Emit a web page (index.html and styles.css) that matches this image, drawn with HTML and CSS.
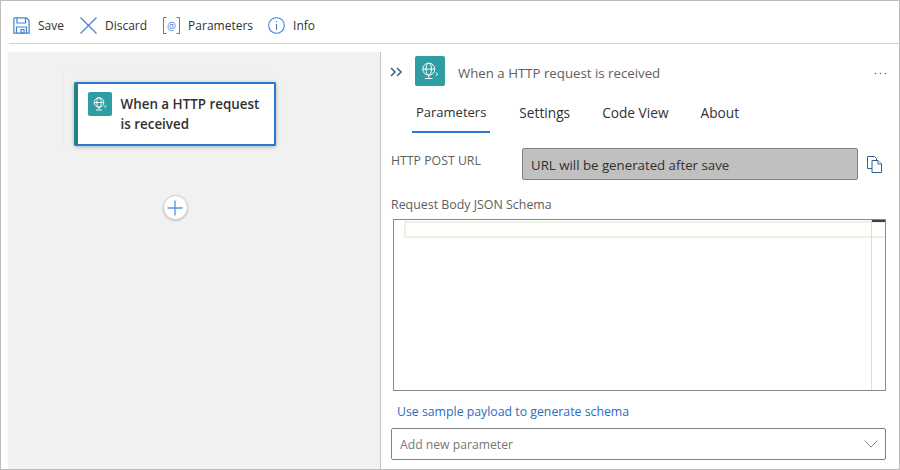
FILE: index.html
```html
<!DOCTYPE html>
<html lang="en">
<head>
  <meta charset="UTF-8">
  <title>Logic App Designer</title>
  <link rel="stylesheet" href="styles.css">
</head>
<body>
  <div class="app">
    <div class="toolbar">
      <button class="tool tool-save">
        <svg class="tool-icon" width="17" height="17" viewBox="0 0 17 17" fill="none" stroke="#3f83d6" stroke-width="1.200">
          <path d="M1.5 .9h12l2.600 2.600v12.600H.9V1.500z"/>
          <path d="M4 1v5h8.500V1"/>
          <path d="M3.500 16v-6h10v6"/>
          <path d="M8 12.500h3v3.500H8z"/>
        </svg>
        Save
      </button>
      <button class="tool tool-discard">
        <svg class="tool-icon" width="17" height="17" viewBox="0 0 17 17" fill="none" stroke="#3f83d6" stroke-width="1.2">
          <path d="M.5 .5l16 16M16.500 .5l-16 16"/>
        </svg>
        Discard
      </button>
      <button class="tool tool-params">
        <svg class="tool-icon" width="17" height="17" viewBox="0 0 17 17" fill="none" stroke="#3f83d6" stroke-width="1">
          <path d="M3.500 .5H.5v16h3M13.500 .5h3v16h-3"/>
          <text class="at-sign" x="8.500" y="12.500" text-anchor="middle">@</text>
        </svg>
        Parameters
      </button>
      <button class="tool tool-info">
        <svg class="tool-icon" width="17" height="17" viewBox="0 0 17 17" fill="none" stroke="#3f83d6" stroke-width="1.1">
          <circle cx="8.500" cy="8.500" r="7.800"/>
          <path d="M8.500 7v6"/>
          <path d="M8.500 4v1.400"/>
        </svg>
        Info
      </button>
    </div>

    <div class="main">
      <div class="canvas">
        <div class="card-ghost">
          <div class="card">
            <span class="badge badge-small">
              <svg width="16" height="16" viewBox="0 0 16 16" fill="none" stroke="#fff" stroke-width=".9">
                <circle cx="7" cy="6.500" r="4.800"/>
                <ellipse cx="7" cy="6.500" rx="2.200" ry="4.800"/>
                <path d="M2.200 6.500h9.600M7 11.300v2.200M4 14h6M12.500 9l1.500 1.500-1.500 1.500"/>
              </svg>
            </span>
            <div class="card-title">When a HTTP request is received</div>
          </div>
        </div>
        <button class="add-step">
          <svg width="16" height="16" viewBox="0 0 16 16" stroke="#5b98e0" stroke-width="1.300">
            <path d="M8 .5v15M.5 8h15"/>
          </svg>
        </button>
      </div>

      <div class="panel">
        <div class="panel-head">
          <svg class="collapse" width="13" height="10" viewBox="0 0 13 10" fill="none" stroke="#2f5f8f" stroke-width="1.500">
            <path d="M1 1l4 4-4 4M7 1l4 4-4 4"/>
          </svg>
          <span class="badge badge-large">
            <svg width="20" height="20" viewBox="0 0 16 16" fill="none" stroke="#fff" stroke-width=".8">
              <circle cx="7" cy="6.500" r="4.800"/>
              <ellipse cx="7" cy="6.500" rx="2.200" ry="4.800"/>
              <path d="M2.200 6.500h9.600M7 11.300v2.200M4 14h6M12.500 9l1.500 1.500-1.500 1.500"/>
            </svg>
          </span>
          <span class="panel-title">When a HTTP request is received</span>
          <svg class="more" width="13" height="3" viewBox="0 0 13 3" fill="#2b6cc0">
            <circle cx="1.500" cy="1.500" r=".8"/>
            <circle cx="6.500" cy="1.500" r=".8"/>
            <circle cx="11.500" cy="1.500" r=".8"/>
          </svg>
        </div>

        <div class="tabs">
          <div class="tab tab-active">Parameters</div>
          <div class="tab">Settings</div>
          <div class="tab">Code View</div>
          <div class="tab">About</div>
        </div>

        <div class="url-row">
          <label class="url-label">HTTP POST URL</label>
          <div class="url-box">URL will be generated after save</div>
          <svg class="copy" width="15" height="17" viewBox="0 0 15 17" fill="#fff" stroke="#2f5f8f" stroke-width="1">
            <path d="M.5 .5h7l2 2v10h-9z"/>
            <path d="M5 4.500h6l3.500 3.500v8.500H5z"/>
            <path d="M11 4.500V8h3.500"/>
          </svg>
        </div>

        <div class="schema-label">Request Body JSON Schema</div>
        <div class="editor">
          <div class="editor-line"></div>
          <div class="editor-ruler"></div>
          <div class="editor-mark"></div>
        </div>

        <a class="sample-link">Use sample payload to generate schema</a>

        <div class="param-select">
          <span>Add new parameter</span>
          <svg width="14" height="8" viewBox="0 0 14 8" fill="none" stroke="#8a8a8a" stroke-width="1">
            <path d="M.5 .5L7 7l6.500-6.500"/>
          </svg>
        </div>
      </div>
    </div>
  </div>
</body>
</html>
```

FILE: styles.css
```css
* {
  box-sizing: border-box;
}
body {
  margin: 0;
  font-family: "Open Sans", "Noto Sans", sans-serif;
  font-size: 12px;
  color: #323130;
  background-color: #fff;
}
.app {
  width: 900px;
  height: 470px;
  display: flex;
  flex-direction: column;
  border: 1px solid #bdbdbd;
  padding-left: 1px;
  overflow: hidden;
}
.toolbar {
  height: 43px;
  margin-left: 7px;
  margin-right: -1px;
  padding-left: 4px;
  padding-top: 6px;
  flex-shrink: 0;
  display: flex;
  align-items: center;
  border-bottom: 1px solid #d2d2d2;
}
.tool {
  display: flex;
  align-items: center;
  padding: 0;
  border: none;
  background: none;
  font: inherit;
  color: #323130;
}
.tool-icon {
  margin-right: 8px;
}
.tool-save,
.tool-discard {
  margin-right: 16px;
}
.tool-params {
  margin-right: 15px;
}
.at-sign {
  font-size: 10px;
  fill: #3f83d6;
  stroke: none;
}
.main {
  flex: 1;
  display: flex;
  margin-top: 8px;
  min-height: 0;
}
.canvas {
  width: 372px;
  margin-left: 6px;
  padding-top: 16px;
  background-color: #f1f1f1;
  display: flex;
  flex-direction: column;
  align-items: center;
}
.card-ghost {
  width: 205px;
  margin-left: -58px;
  padding: 13px 0 0 10px;
  border-top: 1px solid #ebeff5;
  border-left: 1px solid #ececec;
}
.card {
  width: 202px;
  height: 64px;
  display: flex;
  padding: 8px 8px 0 10px;
  background-color: #fff;
  border: 2px solid #2b78d4;
  border-left: 4px solid #24808a;
  border-radius: 2px;
  box-shadow: 0 1px 4px rgba(0, 0, 0, 0.25);
}
.badge {
  display: flex;
  align-items: center;
  justify-content: center;
  flex-shrink: 0;
  background-color: #2f9ea2;
  border-radius: 2px;
}
.badge-small {
  width: 24px;
  height: 24px;
}
.card-title {
  margin-left: 9px;
  padding-top: 2px;
  font-size: 13.4px;
  font-weight: 600;
  line-height: 20px;
}
.add-step {
  width: 25px;
  height: 25px;
  margin-top: 49px;
  margin-left: -38px;
  padding: 0;
  display: flex;
  align-items: center;
  justify-content: center;
  background-color: #fff;
  border: 1px solid #cfcfcf;
  border-radius: 50%;
  box-shadow: 0 1px 2px rgba(0, 0, 0, 0.2);
}
.panel {
  flex: 1;
  padding-left: 9px;
  padding-right: 12px;
  border-left: 1px solid #c4c4c4;
  display: flex;
  flex-direction: column;
}
.panel-head {
  height: 34px;
  display: flex;
  align-items: center;
  margin-top: 2px;
}
.collapse {
  margin-right: 12px;
  margin-top: 2px;
}
.badge-large {
  width: 30px;
  height: 30px;
}
.panel-title {
  margin-left: 13px;
  margin-top: 4px;
  font-size: 13.25px;
  color: #605e5c;
}
.more {
  margin-left: auto;
  margin-top: 4px;
}
.tabs {
  display: flex;
  margin-left: 22px;
  margin-top: 3px;
  height: 42px;
}
.tab {
  padding: 12px 4px 0;
  margin-right: 24px;
  font-size: 13.7px;
}
.tab-active {
  margin-right: 25px;
  font-size: 13px;
  border-bottom: 2px solid #2b78d4;
}
.url-row {
  display: flex;
  align-items: flex-start;
  margin-top: 15px;
}
.url-label {
  width: 131px;
  margin-left: 1px;
  padding-top: 4px;
  font-size: 12.3px;
  color: #605e5c;
}
.url-box {
  width: 336px;
  height: 32px;
  padding: 8px;
  background-color: #c0c0c0;
  border: 1px solid #808080;
  border-radius: 2px;
  font-size: 13.25px;
  line-height: 16px;
}
.copy {
  margin: 8px 0 0 9px;
}
.schema-label {
  margin-top: 16px;
  margin-left: 1px;
  height: 23px;
  font-size: 12.4px;
  color: #605e5c;
}
.editor {
  position: relative;
  width: 493px;
  height: 172px;
  margin-left: 3px;
  background-color: #fffffd;
  border: 1px solid #8a8a8a;
}
.editor-line {
  position: absolute;
  left: 10px;
  right: 0;
  top: 1px;
  height: 17px;
  border: 2px solid #eeeeea;
  border-right: none;
}
.editor-ruler {
  position: absolute;
  right: 13px;
  top: 0;
  bottom: 0;
  border-left: 1px solid #dcdcdc;
}
.editor-mark {
  position: absolute;
  right: 0;
  top: 0;
  width: 13px;
  height: 2px;
  background-color: #404040;
}
.sample-link {
  margin: 12px 0 0 7px;
  height: 25px;
  font-size: 12.3px;
  color: #2b6cc0;
}
.param-select {
  width: 495px;
  height: 32px;
  margin-left: 1px;
  display: flex;
  align-items: center;
  justify-content: space-between;
  padding: 0 7px 0 8px;
  border: 1px solid #808080;
  border-radius: 2px;
  font-size: 12.2px;
  color: #797775;
}
```
